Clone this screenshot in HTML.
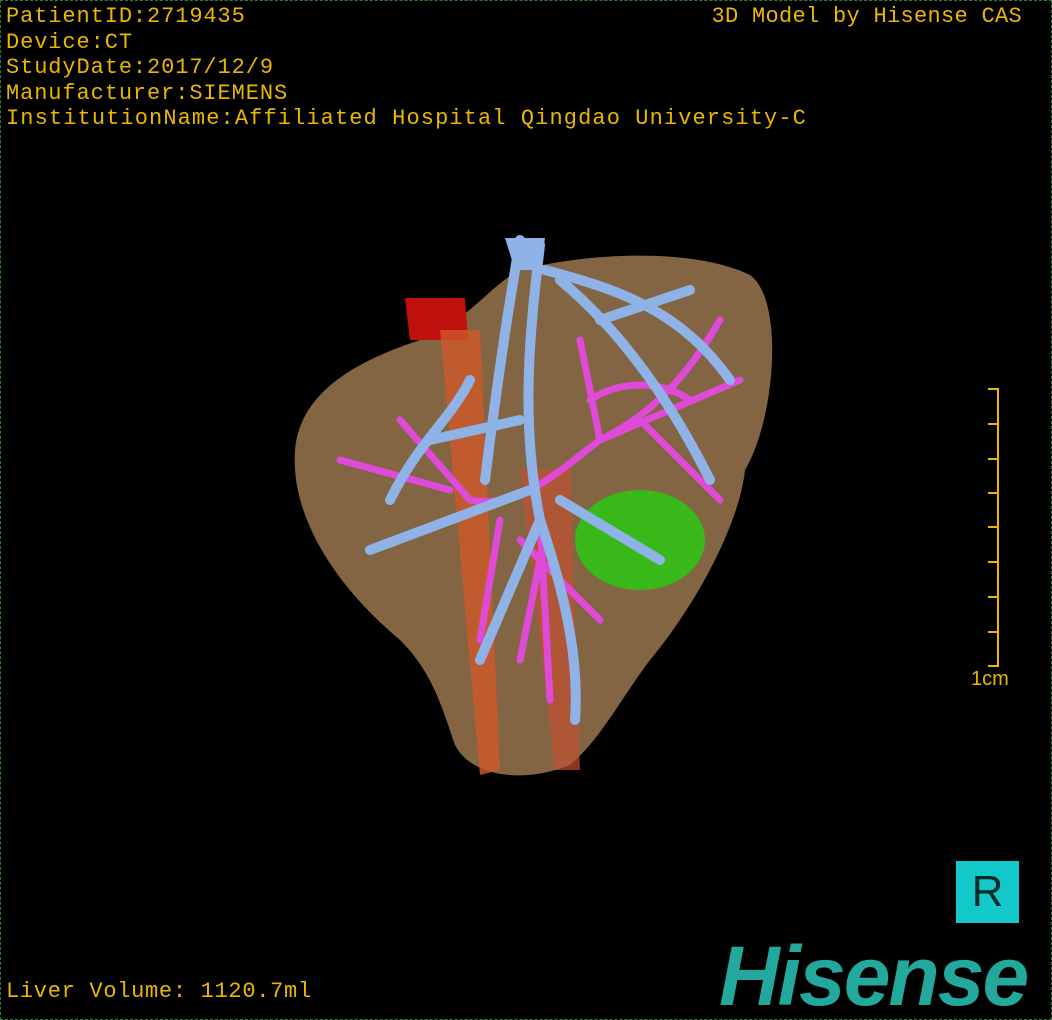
<!DOCTYPE html>
<html><head><meta charset="utf-8"><style>
html,body{margin:0;padding:0;background:#000;}
#c{position:relative;width:1052px;height:1020px;overflow:hidden;background:#000;font-family:"Liberation Mono","Noto Sans CJK SC",monospace;color:#e8b800;}
.t{position:absolute;left:6px;font-size:22px;line-height:25px;white-space:pre;letter-spacing:0.9px}
.fr{position:absolute;border:1px dashed #2e7d32;box-sizing:border-box;left:0;top:0;width:1052px;height:1020px}
</style></head><body><div id="c">
<div class="fr"></div>
<div class="t" style="top:4px">PatientID:2719435</div>
<div class="t" style="top:30px">Device:CT</div>
<div class="t" style="top:55px">StudyDate:2017/12/9</div>
<div class="t" style="top:81px">Manufacturer:SIEMENS</div>
<div class="t" style="top:106px;letter-spacing:1.1px">InstitutionName:Affiliated Hospital Qingdao University-C</div>
<div class="t" style="top:4px;left:auto;right:30px;letter-spacing:0.3px">3D Model by Hisense CAS</div>
<div class="t" style="top:979px;letter-spacing:0.7px">Liver Volume: 1120.7ml</div>
<div class="t" style="top:667px;left:971px;font-family:'Liberation Sans',sans-serif;font-size:20px;letter-spacing:0">1cm</div>
<svg width="1052" height="1020" style="position:absolute;left:0;top:0">
<g stroke="#e8b800" stroke-width="2">
<line x1="998" y1="388" x2="998" y2="667"/>
<line x1="988" y1="389" x2="998" y2="389"/><line x1="988" y1="424" x2="998" y2="424"/><line x1="988" y1="459" x2="998" y2="459"/><line x1="988" y1="493" x2="998" y2="493"/><line x1="988" y1="527" x2="998" y2="527"/><line x1="988" y1="562" x2="998" y2="562"/><line x1="988" y1="597" x2="998" y2="597"/><line x1="988" y1="632" x2="998" y2="632"/><line x1="988" y1="666" x2="998" y2="666"/>
</g>
<path d="M520 270 C600 250 700 250 750 275 C785 300 775 420 745 470 C740 520 700 600 650 660 C620 700 600 740 570 765 C520 785 470 775 455 745 C440 700 430 670 400 640 C340 590 290 520 295 450 C300 390 360 360 420 340 C470 320 490 285 520 270Z" fill="#8a6a48" opacity="0.95"/>
<path d="M405 298 L465 298 L468 340 L410 340Z" fill="#c0100c"/>
<path d="M440 330 L480 330 L500 770 L480 775Z" fill="#d0572a" opacity="0.8"/>
<path d="M520 470 L570 470 L580 770 L555 770Z" fill="#c25030" opacity="0.7"/>
<ellipse cx="640" cy="540" rx="65" ry="50" fill="#39b81a"/>
<g stroke="#e04ad8" stroke-width="7" fill="none" stroke-linecap="round">
<path d="M590 400 C620 380 660 380 690 400"/><path d="M470 500 C520 510 560 470 600 440 C640 420 680 390 720 320"/>
<path d="M540 520 L550 700"/><path d="M500 520 L480 640"/><path d="M470 500 L400 420"/><path d="M450 490 L340 460"/>
<path d="M600 440 L580 340"/><path d="M640 420 L720 500"/><path d="M600 440 L740 380"/><path d="M520 540 L600 620"/><path d="M540 560 L520 660"/>
</g>
<g stroke="#8fb3e6" stroke-width="10" fill="none" stroke-linecap="round">
<path d="M520 240 C510 300 500 360 485 480"/><path d="M540 245 C530 330 520 420 540 520 C560 580 580 650 575 720"/>
<path d="M545 270 C620 290 680 310 730 380"/><path d="M560 280 C620 330 670 400 710 480"/>
<path d="M470 380 C450 420 420 440 390 500"/><path d="M540 520 L480 660"/><path d="M530 490 L370 550"/>
<path d="M520 420 L430 440"/><path d="M560 500 L660 560"/><path d="M600 320 L690 290"/>
</g>
<path d="M505 238 L545 238 L540 270 L515 270Z" fill="#8fb3e6"/>
</svg>
<div style="position:absolute;left:956px;top:861px;width:63px;height:62px;background:#12c8c8;color:#0a2a2a;font-family:'Liberation Sans',sans-serif;font-size:44px;line-height:62px;text-align:center">R</div>
<div style="position:absolute;left:719px;top:936px;font-family:'Liberation Sans',sans-serif;font-weight:bold;font-style:italic;font-size:84px;line-height:80px;color:#22a89c;letter-spacing:-2px">Hisense</div>
</div></body></html>
